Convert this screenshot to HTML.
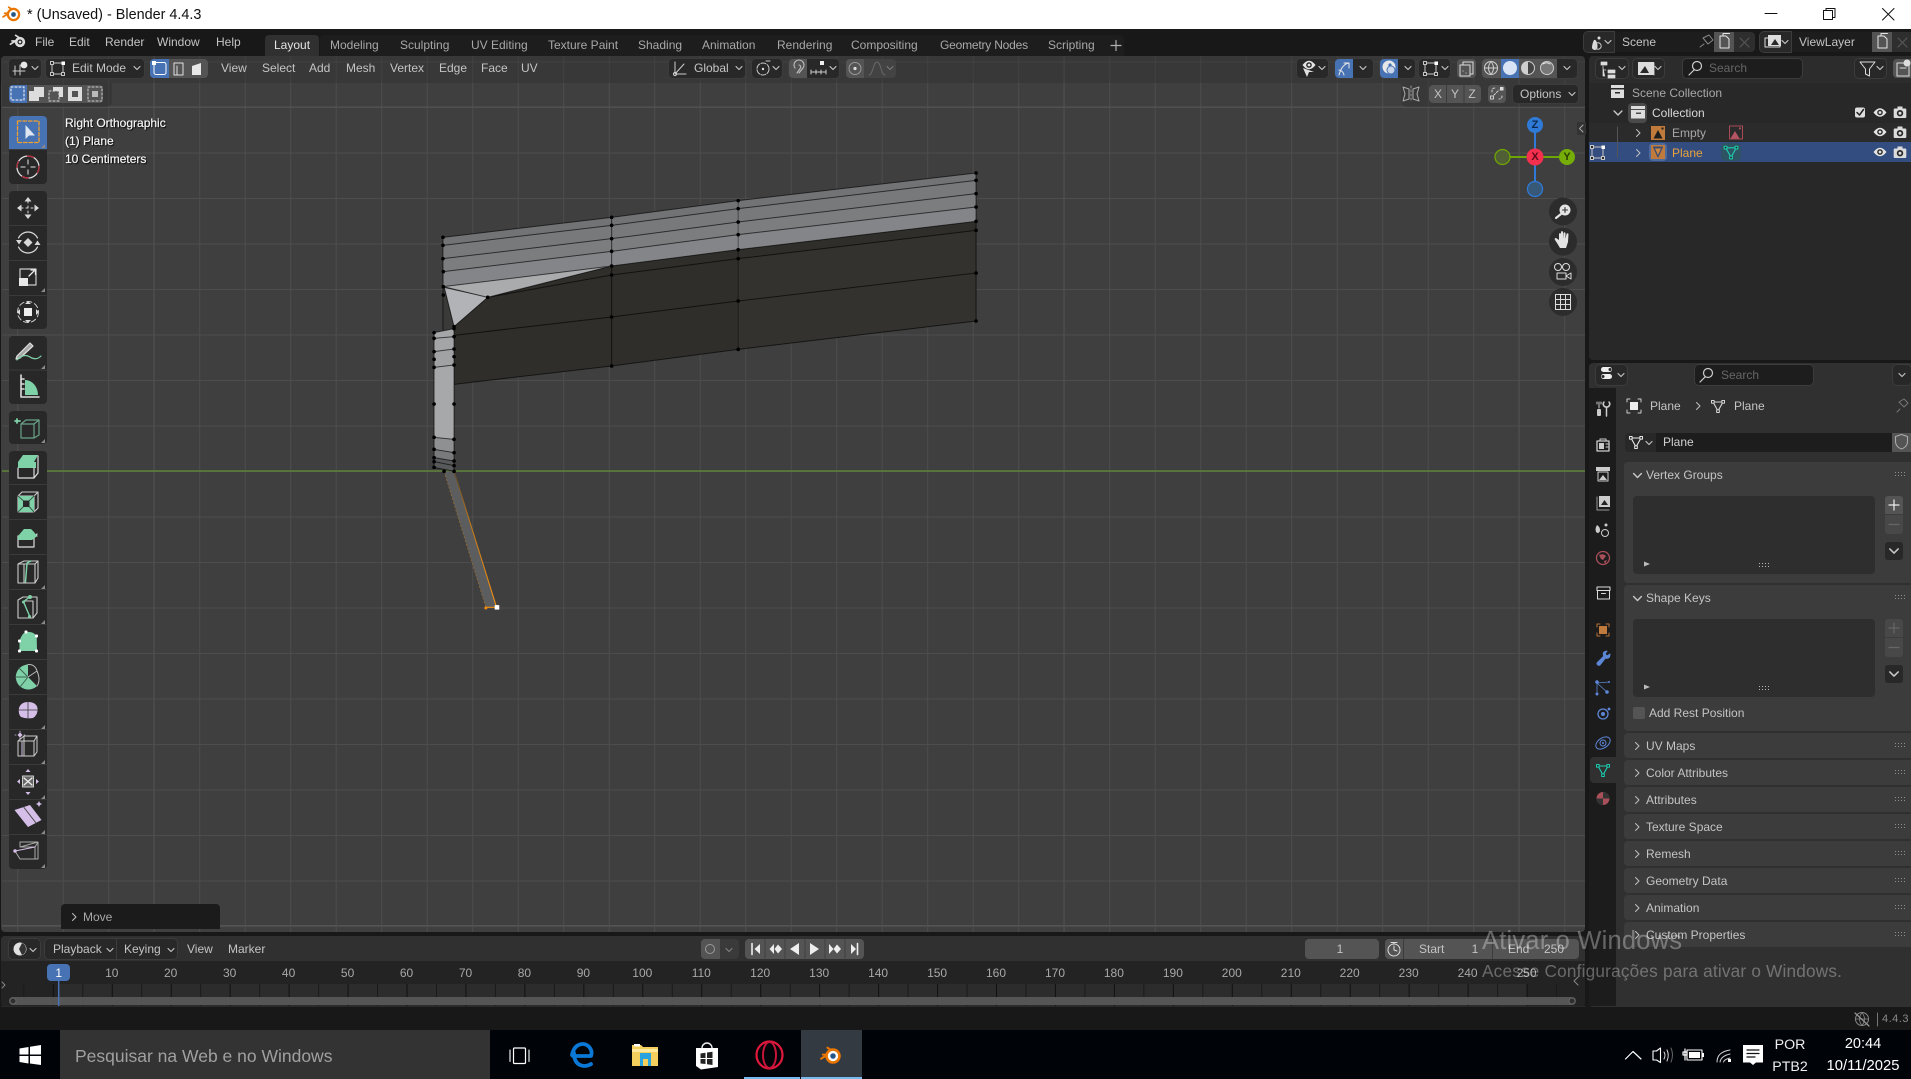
<!DOCTYPE html>
<html><head><meta charset="utf-8"><title>Blender</title>
<style>
html,body{margin:0;padding:0;width:1911px;height:1079px;overflow:hidden;background:#181818}
body{position:relative;font-family:"Liberation Sans",sans-serif;font-size:12px;color:#c4c4c4}
.b{position:absolute;display:block}
.t{position:absolute;line-height:0;white-space:nowrap;letter-spacing:0}
.c{transform:translateX(-50%)}
.d{color:#a8a8a8}
.w{background:#282828;border-radius:4px;box-shadow:0 0 0 1px #3c3c3c}
.g{background:#545454}
svg{position:absolute;left:0;top:0}
</style></head><body>
<!-- title bar -->
<i class="b" style="left:0;top:0;width:1911px;height:29px;background:#fff"></i>
<span class="t" style="left:27px;top:14.5px;font-size:14.4px;color:#111">* (Unsaved) - Blender 4.4.3</span>
<!-- top bar -->
<i class="b" style="left:0;top:29px;width:1911px;height:27px;background:#181818"></i>
<i class="b" style="left:320px;top:35px;width:804px;height:21px;background:#1d1d1d;border-radius:4px 4px 0 0"></i>
<i class="b" style="left:265px;top:35px;width:54px;height:21px;background:#303030;border-radius:4px 4px 0 0"></i>
<!-- viewport -->
<svg width="1911" height="1079" viewBox="0 0 1911 1079">
<defs>
<pattern id="gr" x="17.2" y="16" width="45.5" height="45.5" patternUnits="userSpaceOnUse"><path d="M.5 0V45.5M0 .5H45.5" stroke="#4d4d4d" stroke-width="1" fill="none"/></pattern>
<pattern id="tk" x="52.8" y="0" width="58.95" height="30" patternUnits="userSpaceOnUse"><path d="M.5 0V30" stroke="#101010"/><path d="M29.97 0V30" stroke="#1a1a1a"/></pattern>
<linearGradient id="og" gradientUnits="userSpaceOnUse" x1="92" y1="934" x2="207" y2="1342"><stop offset="0" stop-color="#5c4a2c"/><stop offset=".35" stop-color="#b8741c"/><stop offset="1" stop-color="#f59010"/></linearGradient>
</defs>
<path d="M5 56H1581a4 4 0 0 1 4 4V928a4 4 0 0 1-4 4H5a4 4 0 0 1-4-4V60a4 4 0 0 1 4-4Z" fill="#3f3f3f"/>
<clipPath id="vp"><rect x="2" y="56" width="1583" height="876" rx="4"/></clipPath>
<g clip-path="url(#vp)">
<rect x="0" y="56" width="1585" height="876" fill="url(#gr)"/>
<path d="M154 56V932M1064 56V932M1519 56V932" stroke="#505050" fill="none"/>
<path d="M0 107H1585M0 925.5H1585" stroke="#535353" fill="none"/>
<path d="M0 471H1585" stroke="#5f8238" stroke-width="1.5"/>
</g>
<!-- mesh -->
<g transform="translate(420,160) scale(.36996,.33333)" stroke-linejoin="round">
<polygon points="62,232 518,172 860,122 1503,39 1503,61 860,146 518,196 62,256" fill="#717375"/>
<polygon points="62,256 518,196 860,146 1503,61 1503,101 860,186 518,236 62,296" fill="#77797b"/>
<polygon points="62,296 518,236 860,186 1503,101 1503,141 860,224 518,274 63,335" fill="#7b7d7f"/>
<polygon points="63,335 518,274 860,224 1503,141 1503,184 860,269 518,318 63,380" fill="#838588"/>
<polygon points="63,380 518,318 183,412" fill="#a9abad"/>
<polygon points="66,384 183,412 92,500" fill="#b2b3b6"/>
<polygon points="63,380 66,384 92,500 92,508 63,512" fill="#3a3a38"/>
<polygon points="183,412 518,318 860,269 1503,184 1503,483 860,568 518,618 92,673 92,500" fill="#2f2e2a"/>
<polygon points="860,296 1503,211 1503,483 860,568" fill="#33322e"/>
<polygon points="38,518 92,506 92,530 38,535" fill="#a4a6a8"/>
<polygon points="38,535 92,530 92,567 38,575" fill="#a3a5a7"/>
<polygon points="38,575 92,567 92,615 38,622" fill="#a0a2a4"/>
<polygon points="38,622 92,615 92,838 38,832" fill="#a6a8aa"/>
<polygon points="38,832 92,838 92,878 38,868" fill="#8e9092"/>
<polygon points="38,868 92,878 92,903 38,893" fill="#787a7c"/>
<polygon points="38,893 92,903 92,934 38,922" fill="#58595a"/>
<polygon points="65,934 92,934 207,1342 178,1342" fill="#5c5d5e"/>
<g fill="none" stroke="#000" stroke-opacity=".62" stroke-width="1">
<path vector-effect="non-scaling-stroke" d="M62 232L518 172L860 122L1503 39M62 256L518 196L860 146L1503 61M62 296L518 236L860 186L1503 101M63 335L518 274L860 224L1503 141M63 380L518 318L860 269L1503 184M183 412L518 318M63 380L183 412L92 500L66 384M92 526L518 471L860 423L1503 339M518 345L860 296L1503 211M92 673L518 618L860 568L1503 483L1503 39M518 172V618M62 232V510M92 500V934M38 518V922M38 518L92 506M38 535L92 530M38 575L92 567M38 622L92 615M38 832L92 838M38 868L92 878M38 893L92 903M38 905L92 917M38 922L92 934M183 412L518 345"/>
<path vector-effect="non-scaling-stroke" stroke-opacity=".4" d="M860 122V568"/>
</g>
<path d="M92 934L207 1342L178 1342" fill="none" stroke="url(#og)" stroke-width="1.1" vector-effect="non-scaling-stroke"/>
<path d="M65 934L178 1342" fill="none" stroke="#9a6a2a" stroke-opacity=".8" stroke-dasharray="2 2" vector-effect="non-scaling-stroke"/>
<path d="M62 232h.1M62 256h.1M62 296h.1M63 335h.1M63 380h.1M63 405h.1M518 172h.1M518 196h.1M518 236h.1M518 274h.1M518 318h.1M518 345h.1M518 471h.1M518 618h.1M860 122h.1M860 146h.1M860 186h.1M860 224h.1M860 269h.1M860 296h.1M860 423h.1M860 568h.1M1503 39h.1M1503 61h.1M1503 101h.1M1503 141h.1M1503 184h.1M1503 211h.1M1503 339h.1M1503 483h.1M183 412h.1M92 500h.1M92 506h.1M92 530h.1M92 567h.1M92 590h.1M92 615h.1M92 732h.1M92 838h.1M92 878h.1M92 903h.1M92 917h.1M92 934h.1M38 518h.1M38 535h.1M38 575h.1M38 598h.1M38 622h.1M38 732h.1M38 832h.1M38 868h.1M38 893h.1M38 905h.1M38 922h.1M65 934h.1" stroke="#000" stroke-width="3.6" stroke-linecap="round" fill="none" vector-effect="non-scaling-stroke"/>
<path d="M178 1344h.1" stroke="#f08b10" stroke-width="3" stroke-linecap="round" vector-effect="non-scaling-stroke"/>
<path d="M208 1342h.1" stroke="#fff" stroke-width="4.5" stroke-linecap="square" vector-effect="non-scaling-stroke"/>
</g>
</svg>
<!-- viewport header -->
<i class="b" style="left:1px;top:56px;width:1584px;height:27px;background:rgba(48,48,48,.4);border-radius:4px 4px 0 0"></i>
<i class="b" style="left:2px;top:83px;width:110px;height:24px;background:rgba(48,48,48,.5);border-radius:0 0 6px 0"></i>
<i class="b" style="left:1401px;top:83px;width:184px;height:24px;background:rgba(48,48,48,.4);border-radius:0 0 0 6px"></i>
<i class="b w" style="left:9px;top:59px;width:32px;height:19px"></i>
<i class="b w" style="left:46px;top:59px;width:98px;height:19px"></i>
<i class="b g" style="left:150px;top:59px;width:58px;height:19px;border-radius:4px"></i>
<i class="b" style="left:150px;top:59px;width:19px;height:19px;background:#4772b3;border-radius:4px 0 0 4px"></i>
<i class="b w" style="left:669px;top:59px;width:76px;height:19px"></i>
<i class="b w" style="left:752px;top:59px;width:30px;height:19px"></i>
<i class="b w" style="left:789px;top:59px;width:50px;height:19px"></i>
<i class="b g" style="left:789px;top:59px;width:18px;height:19px;border-radius:4px 0 0 4px"></i>
<i class="b" style="left:846px;top:59px;width:50px;height:19px;background:#434343;border-radius:4px"></i>
<i class="b g" style="left:846px;top:59px;width:18px;height:19px;border-radius:4px 0 0 4px"></i>
<i class="b w" style="left:1297px;top:59px;width:31px;height:19px"></i>
<i class="b w" style="left:1335px;top:59px;width:38px;height:19px"></i>
<i class="b" style="left:1335px;top:59px;width:18px;height:19px;background:#4772b3;border-radius:4px 0 0 4px"></i>
<i class="b w" style="left:1380px;top:59px;width:35px;height:19px"></i>
<i class="b" style="left:1380px;top:59px;width:18px;height:19px;background:#4772b3;border-radius:4px 0 0 4px"></i>
<i class="b w" style="left:1419px;top:59px;width:31px;height:19px"></i>
<i class="b g" style="left:1457px;top:59px;width:19px;height:19px;border-radius:4px"></i>
<i class="b w" style="left:1482px;top:59px;width:95px;height:19px"></i>
<i class="b g" style="left:1482px;top:59px;width:75px;height:19px;border-radius:4px 0 0 4px"></i>
<i class="b" style="left:1501px;top:59px;width:18px;height:19px;background:#4772b3"></i>
<i class="b g" style="left:1429px;top:85px;width:52px;height:18px;border-radius:4px"></i>
<i class="b g" style="left:1488px;top:85px;width:18px;height:18px;border-radius:4px"></i>
<i class="b w" style="left:1513px;top:85px;width:65px;height:18px;background:#282828"></i>
<i class="b g" style="left:9px;top:85px;width:94px;height:18px;border-radius:4px"></i>
<i class="b" style="left:9px;top:85px;width:18px;height:18px;background:#4772b3;border-radius:4px 0 0 4px"></i>
<!-- toolbar -->
<i class="b" style="left:9px;top:116px;width:38px;height:68px;background:#282828;border-radius:4px"></i>
<i class="b" style="left:9px;top:116px;width:38px;height:33px;background:#4772b3;border-radius:4px 4px 0 0"></i>
<i class="b" style="left:9px;top:191px;width:38px;height:138px;background:#282828;border-radius:4px"></i>
<i class="b" style="left:9px;top:336px;width:38px;height:68px;background:#282828;border-radius:4px"></i>
<i class="b" style="left:9px;top:411px;width:38px;height:33px;background:#282828;border-radius:4px"></i>
<i class="b" style="left:9px;top:451px;width:38px;height:418px;background:#282828;border-radius:4px"></i>
<!-- move panel -->
<i class="b" style="left:61px;top:904px;width:159px;height:25px;background:#1b1b1b;border-radius:4px 4px 0 0"></i>
<!-- right gap / outliner -->
<i class="b" style="left:1586px;top:56px;width:325px;height:951px;background:#181818"></i>
<i class="b" style="left:1589px;top:56px;width:322px;height:304px;background:#282828;border-radius:4px 0 0 4px"></i>
<i class="b" style="left:1589px;top:56px;width:322px;height:27px;background:#2c2c2c;border-radius:4px 0 0 0"></i>
<i class="b" style="left:1589px;top:123px;width:322px;height:19px;background:#2b2b2b"></i>
<i class="b" style="left:1589px;top:142px;width:322px;height:20px;background:#334d80"></i>
<i class="b w" style="left:1596px;top:59px;width:32px;height:19px"></i>
<i class="b w" style="left:1633px;top:59px;width:31px;height:19px"></i>
<i class="b" style="left:1683px;top:59px;width:119px;height:19px;background:#1d1d1d;border-radius:4px;box-shadow:0 0 0 1px #3c3c3c"></i>
<i class="b w" style="left:1855px;top:59px;width:31px;height:19px"></i>
<i class="b g" style="left:1893px;top:59px;width:18px;height:19px;border-radius:4px 0 0 4px"></i>
<i class="b" style="left:1628px;top:103px;width:19px;height:20px;background:#4a4a4a;border-radius:4px"></i>
<i class="b" style="left:1649px;top:143px;width:18px;height:18px;background:#4f6a9d;border-radius:4px"></i>
<i class="b" style="left:1721px;top:143px;width:20px;height:18px;background:#2e5463;border-radius:5px"></i>
<!-- top bar right -->
<i class="b" style="left:1584px;top:32px;width:30px;height:20px;background:#282828;border-radius:4px 0 0 4px;box-shadow:0 0 0 1px #3c3c3c"></i>
<i class="b" style="left:1615px;top:32px;width:99px;height:20px;background:#1d1d1d"></i>
<i class="b g" style="left:1714px;top:32px;width:20px;height:20px"></i>
<i class="b" style="left:1734px;top:32px;width:21px;height:20px;background:#2e2e2e;border-radius:0 4px 4px 0"></i>
<i class="b" style="left:1760px;top:32px;width:31px;height:20px;background:#282828;border-radius:4px 0 0 4px;box-shadow:0 0 0 1px #3c3c3c"></i>
<i class="b" style="left:1792px;top:32px;width:80px;height:20px;background:#1d1d1d"></i>
<i class="b g" style="left:1872px;top:32px;width:20px;height:20px"></i>
<i class="b" style="left:1892px;top:32px;width:19px;height:20px;background:#2e2e2e"></i>
<!-- properties -->
<i class="b" style="left:1589px;top:363px;width:322px;height:644px;background:#303030;border-radius:4px 0 0 4px"></i>
<i class="b" style="left:1589px;top:388px;width:27px;height:618px;background:#1c1c1c"></i>
<i class="b" style="left:1590px;top:757px;width:26px;height:26px;background:#303030;border-radius:4px 0 0 4px"></i>
<i class="b" style="left:1695px;top:365px;width:118px;height:20px;background:#1d1d1d;border-radius:4px;box-shadow:0 0 0 1px #3c3c3c"></i>
<i class="b w" style="left:1596px;top:365px;width:31px;height:20px"></i>
<i class="b w" style="left:1893px;top:365px;width:18px;height:20px"></i>
<i class="b" style="left:1625px;top:433px;width:31px;height:19px;background:#282828;border-radius:4px 0 0 4px"></i>
<i class="b" style="left:1656px;top:433px;width:236px;height:19px;background:#1d1d1d"></i>
<i class="b g" style="left:1892px;top:433px;width:19px;height:19px"></i>
<i class="b" style="left:1624px;top:462px;width:287px;height:121px;background:#3c3c3c;border-radius:4px 0 0 4px"></i>
<i class="b" style="left:1633px;top:496px;width:242px;height:78px;background:#2e2e2e;border-radius:4px"></i>
<i class="b g" style="left:1885px;top:496px;width:18px;height:18px;border-radius:3px 3px 0 0"></i>
<i class="b" style="left:1885px;top:515px;width:18px;height:19px;background:#484848;border-radius:0 0 3px 3px"></i>
<i class="b" style="left:1885px;top:542px;width:18px;height:18px;background:#282828;border-radius:3px"></i>
<i class="b" style="left:1624px;top:585px;width:287px;height:146px;background:#3c3c3c;border-radius:4px 0 0 4px"></i>
<i class="b" style="left:1633px;top:619px;width:242px;height:78px;background:#2e2e2e;border-radius:4px"></i>
<i class="b" style="left:1885px;top:619px;width:18px;height:18px;background:#484848;border-radius:3px 3px 0 0"></i>
<i class="b" style="left:1885px;top:638px;width:18px;height:19px;background:#484848;border-radius:0 0 3px 3px"></i>
<i class="b" style="left:1885px;top:665px;width:18px;height:18px;background:#282828;border-radius:3px"></i>
<i class="b" style="left:1633px;top:707px;width:12px;height:12px;background:#545454;border-radius:2px"></i>
<i class="b" style="left:1624px;top:733px;width:287px;height:25px;background:#3c3c3c;border-radius:4px 0 0 4px"></i>
<i class="b" style="left:1624px;top:760px;width:287px;height:25px;background:#3c3c3c;border-radius:4px 0 0 4px"></i>
<i class="b" style="left:1624px;top:787px;width:287px;height:25px;background:#3c3c3c;border-radius:4px 0 0 4px"></i>
<i class="b" style="left:1624px;top:814px;width:287px;height:25px;background:#3c3c3c;border-radius:4px 0 0 4px"></i>
<i class="b" style="left:1624px;top:841px;width:287px;height:25px;background:#3c3c3c;border-radius:4px 0 0 4px"></i>
<i class="b" style="left:1624px;top:868px;width:287px;height:25px;background:#3c3c3c;border-radius:4px 0 0 4px"></i>
<i class="b" style="left:1624px;top:895px;width:287px;height:25px;background:#3c3c3c;border-radius:4px 0 0 4px"></i>
<i class="b" style="left:1624px;top:922px;width:287px;height:25px;background:#3c3c3c;border-radius:4px 0 0 4px"></i>
<!-- timeline -->
<i class="b" style="left:1px;top:936px;width:1584px;height:71px;background:#232323;border-radius:4px"></i>
<i class="b" style="left:1px;top:936px;width:1584px;height:25px;background:#303030;border-radius:4px 4px 0 0"></i>
<i class="b" style="left:59px;top:984px;width:1468px;height:23px;background:#2c2c2c"></i>
<svg width="1911" height="1079" viewBox="0 0 1911 1079" style="pointer-events:none">
<rect x="2" y="984" width="1583" height="23" fill="url(#tk)"/>
<rect x="9" y="997" width="1567" height="8" rx="4" fill="#555"/>
<circle cx="13" cy="1001" r="3" fill="#2e2e2e" stroke="#666"/>
<circle cx="1572" cy="1001" r="3" fill="#2e2e2e" stroke="#666"/>
<path d="M58.7 981V1007" stroke="#4772b3" stroke-width="1.5"/>
</svg>
<i class="b w" style="left:9px;top:939px;width:31px;height:20px"></i>
<i class="b w" style="left:45px;top:939px;width:132px;height:20px"></i>
<i class="b" style="left:116px;top:939px;width:1px;height:20px;background:#3c3c3c"></i>
<i class="b" style="left:701px;top:939px;width:38px;height:20px;background:#3a3a3a;border-radius:4px"></i>
<i class="b g" style="left:701px;top:939px;width:19px;height:20px;border-radius:4px 0 0 4px"></i>
<i class="b g" style="left:745px;top:939px;width:119px;height:20px;border-radius:4px"></i>
<i class="b g" style="left:1305px;top:939px;width:74px;height:20px;border-radius:4px"></i>
<i class="b g" style="left:1385px;top:939px;width:194px;height:20px;border-radius:4px"></i>
<i class="b" style="left:1492px;top:939px;width:1px;height:20px;background:#3c3c3c"></i>
<i class="b" style="left:1403px;top:939px;width:1px;height:20px;background:#3c3c3c"></i>
<i class="b" style="left:47px;top:964px;width:23px;height:17px;background:#4772b3;border-radius:4px"></i>
<!-- status + taskbar -->
<i class="b" style="left:0;top:1007px;width:1911px;height:23px;background:#181818"></i>
<i class="b" style="left:1px;top:1006px;width:1585px;height:1px;background:#2a2a2a"></i>
<i class="b" style="left:0;top:1030px;width:1911px;height:49px;background:#000308"></i>
<i class="b" style="left:60px;top:1030px;width:430px;height:49px;background:#333"></i>
<i class="b" style="left:801px;top:1030px;width:61px;height:49px;background:#343a42"></i>
<i class="b" style="left:744px;top:1077px;width:56px;height:2px;background:#76b9ed"></i>
<i class="b" style="left:801px;top:1077px;width:61px;height:2px;background:#76b9ed"></i>

<!-- ICONS -->
<svg width="1911" height="1079" viewBox="0 0 1911 1079" fill="none" stroke-linecap="round" stroke-linejoin="round">
<defs>
<g id="c"><path d="M-3-1.5L0 1.5L3-1.5" stroke="#c8c8c8" stroke-width="1.1" fill="none"/></g>
<g id="r"><path d="M-1.5-3.5L2 0L-1.5 3.5" stroke="#c0c0c0" fill="none"/></g>
<g id="eye"><path d="M-6.500 0Q0-8.500 6.500 0Q0 8.500-6.500 0Z" fill="#e4e4e4"/><circle r="2.800" fill="#282828"/><circle r="1.400" fill="#e4e4e4"/></g>
<g id="cam"><rect x="-6.300" y="-4" width="12.600" height="9.500" rx="1" fill="#dcdcdc"/><rect x="-2.500" y="-6" width="5" height="2.500" fill="#dcdcdc"/><circle cy=".7" r="3.200" fill="#282828"/><circle cy=".7" r="1.500" fill="#dcdcdc"/></g>
<g id="blend"><path d="M-13 3L-5-2M-11-1.5L-2-1.5M-6-9L2-4" stroke="#ea7600" stroke-width="2.2"/><circle r="7" fill="#fff" stroke="#ea7600" stroke-width="2.8"/><circle r="3" fill="#265787"/></g>
<g id="gd" fill="#8f8f8f"><rect width="1" height="1"/><rect x="3" width="1" height="1"/><rect x="6" width="1" height="1"/><rect x="9" width="1" height="1"/><rect y="3" width="1" height="1"/><rect x="3" y="3" width="1" height="1"/><rect x="6" y="3" width="1" height="1"/><rect x="9" y="3" width="1" height="1"/></g>
<g id="gd2" fill="#b8b8b8"><rect width="1" height="1"/><rect x="3" width="1" height="1"/><rect x="6" width="1" height="1"/><rect x="9" width="1" height="1"/><rect y="3" width="1" height="1"/><rect x="3" y="3" width="1" height="1"/><rect x="6" y="3" width="1" height="1"/><rect x="9" y="3" width="1" height="1"/></g>
<path id="cn" d="M4 0V4H0Z" fill="#8a8a8a"/>
<g id="meshi"><path d="M-5-4H5L0 5Z" stroke="currentColor" stroke-width="1.1"/><rect x="-6.500" y="-5.500" width="2.600" height="2.600" fill="#222" stroke="currentColor"/><rect x="3.900" y="-5.500" width="2.600" height="2.600" fill="#222" stroke="currentColor"/><rect x="-1.300" y="3.900" width="2.600" height="2.600" fill="#222" stroke="currentColor"/></g>
<g id="ed"><rect x="-6" y="-5" width="11" height="11" stroke="#c8c8c8" fill="none"/><rect x="-7.500" y="-6.500" width="3" height="3" fill="#282828" stroke="#c8c8c8"/><rect x="3.500" y="-6.500" width="3.500" height="3.500" fill="#fff"/><rect x="-7.500" y="4.500" width="3" height="3" fill="#282828" stroke="#c8c8c8"/><rect x="3.500" y="4.500" width="3" height="3" fill="#282828" stroke="#c8c8c8"/></g>
</defs>
<!-- title logo + window controls -->
<use href="#blend" transform="translate(13.500,14.500) scale(.8)"/>
<path d="M1765 13.5H1777" stroke="#111"/>
<rect x="1823.500" y="10.500" width="9" height="9" stroke="#111"/><path d="M1826 10V8.500H1835V17.500H1833" stroke="#111"/>
<path d="M1882.500 8.500L1894 20M1894 8.500L1882.500 20" stroke="#111"/>
<!-- top bar icon -->
<g transform="translate(20,42) scale(.74)"><path d="M-13 3L-5-2M-11-1.500L-2-1.500M-6-9L2-4" stroke="#ddd" stroke-width="2.200"/><circle r="7" fill="#ddd"/><circle r="3.400" fill="#181818"/><circle r="1.800" fill="#ddd"/></g>
<path d="M1111 45.500H1121M1116 40.500V50.500" stroke="#b0b0b0" stroke-width="1.200"/>
<!-- viewport header left -->
<path d="M15 66V75M13 71H25M20 65V75" stroke="#ccc"/><circle cx="24" cy="65" r="3.400" fill="#e8e8e8"/><use href="#c" x="35" y="68"/>
<use href="#ed" x="58" y="68"/><use href="#c" x="137" y="68"/>
<g stroke-width="1"><rect x="154" y="62.500" width="12" height="12" stroke="#fff" rx="2"/><rect x="152" y="61" width="4" height="4" fill="#fff"/>
<path d="M174 63H183V75H174ZM177 66V75" stroke="#e0e0e0"/><path d="M192 66L201 63V75H192Z" fill="#e8e8e8"/></g>
<!-- global -->
<path d="M675 62V74L686 74M675 74L684 64" stroke="#ccc"/><circle cx="675" cy="74" r="1.600" stroke="#ccc"/><use href="#c" x="739" y="68"/>
<circle cx="763" cy="69" r="6" stroke="#ccc" stroke-dasharray="5 1.500"/><circle cx="763" cy="69" r="1.200" fill="#ddd"/><path d="M766 61H770" stroke="#ccc"/><use href="#c" x="776" y="68"/>
<path d="M795 68a5 5 0 1 1 8 0L799 73M799 65a2 2 0 0 1 1.500 3L797 73" stroke="#bdbdbd" stroke-width="1.100"/>
<path d="M811 70V74M816 70V74M821 70V74M826 70V74M811 72H826" stroke="#ccc"/><rect x="820" y="61" width="4" height="4" fill="#eee"/><use href="#c" x="833" y="68"/>
<circle cx="855" cy="68.500" r="6" stroke="#999"/><circle cx="855" cy="68.500" r="1.600" fill="#ddd"/>
<path d="M869 75C873 75 873 62 877 62C881 62 881 75 885 75" stroke="#666"/><use href="#c" x="890" y="68" opacity=".4"/>
<!-- viewport header right -->
<use href="#eye" x="1309" y="65"/><path d="M1303 68L1307 77L1309 72L1314 72Z" fill="#e0e0e0"/><use href="#c" x="1322" y="68"/>
<path d="M1339 75Q1342 64 1349 63M1344 63H1349V68M1339 70a6 6 0 0 1 5 5" stroke="#e8e8e8"/><use href="#c" x="1363" y="68"/>
<circle cx="1389" cy="67" r="6.500" fill="#e8e8e8"/><circle cx="1391" cy="70" r="4" stroke="#4772b3" fill="#c8d4e8"/><circle cx="1390" cy="65" r="1.600" fill="#4772b3"/><use href="#c" x="1408" y="68"/>
<use href="#ed" x="1431" y="68"/><use href="#c" x="1445" y="68"/>
<rect x="1463" y="62" width="10" height="12" stroke="#ddd"/><rect x="1460" y="65" width="10" height="11" stroke="#ddd" fill="#545454"/><path d="M1463 71h.1M1466 73h.1" stroke="#ddd"/>
<circle cx="1491" cy="68" r="6.500" stroke="#cfcfcf"/><path d="M1484.500 68H1497.500M1491 61.500Q1486 68 1491 74.500Q1496 68 1491 61.500" stroke="#cfcfcf"/>
<circle cx="1510" cy="68" r="7" fill="#d8e4f6"/>
<circle cx="1528" cy="68" r="6.500" fill="#444" stroke="#ccc"/><path d="M1528 61.500A6.500 6.500 0 0 0 1528 74.500Z" fill="#cfcfcf"/>
<circle cx="1547" cy="68" r="6.500" fill="#777" stroke="#ccc"/><path d="M1543 64a6 6 0 0 1 7 0" stroke="#eee"/>
<use href="#c" x="1567" y="68"/>
<!-- tool settings right -->
<path d="M1411 86V102" stroke="#999" stroke-dasharray="2 2"/><path d="M1409 89L1403 87L1405 94L1403 101L1409 99ZM1413 89L1419 87L1417 94L1419 101L1413 99Z" stroke="#aaa"/>
<path d="M1446.500 85V103M1464 85V103" stroke="#3c3c3c"/>
<rect x="1490.500" y="96" width="3" height="3" stroke="#ccc"/><rect x="1500" y="87" width="3.500" height="3.500" fill="#ddd"/><path d="M1494 95L1499 90M1492 92V90a3 3 0 0 1 3-2M1502 96v1a3 3 0 0 1-3 2" stroke="#ccc" stroke-dasharray="2 1.500"/>
<use href="#c" x="1572" y="94"/>
<!-- select modes -->
<rect x="11" y="87" width="13" height="13" stroke="#fff" stroke-dasharray="2 2"/>
<rect x="29" y="91" width="10" height="10" fill="#ddd"/><rect x="34" y="87" width="10" height="10" fill="#ddd"/>
<rect x="49" y="91" width="10" height="10" stroke="#ddd" stroke-dasharray="2 2"/><path d="M53 87H63V97H59V91H53Z" fill="#ddd"/>
<path d="M68 87H82V101H68ZM72 91V97H78V91Z" fill="#ddd" fill-rule="evenodd"/>
<rect x="88" y="87" width="14" height="14" stroke="#ccc" stroke-dasharray="2 2"/><rect x="92" y="91" width="6" height="6" fill="#bbb"/>
<!-- tools -->
<rect x="17.500" y="121" width="21.500" height="21.500" stroke="#f0a030" stroke-width="1.300" stroke-dasharray="3.500 2"/><path d="M25.500 125V139L29 135.500L35 135.500Z" fill="#dfe6f2"/>
<use href="#cn" x="41" y="144"/>
<circle cx="28" cy="167" r="11" stroke="#ddd" stroke-width="1.300"/><circle cx="28" cy="167" r="11" stroke="#b03040" stroke-width="1.400" stroke-dasharray="6 11"/><path d="M21 167H25M31 167H35M28 160V164M28 170V174" stroke="#bbb" stroke-width="1.300"/>
<g fill="#d8d8d8"><path d="M28 197l-3.500 4.500h7zM28 219l-3.500-4.500h7zM17 208l4.500-3.500v7zM39 208l-4.500-3.500v7z"/></g><path d="M21 208H35M28 201V215" stroke="#d8d8d8" stroke-dasharray="2 3"/>
<path d="M18.500 238A10.500 10.500 0 0 1 37.500 238M37.500 247A10.500 10.500 0 0 1 18.500 247" stroke="#d8d8d8" stroke-width="1.200"/><path d="M16 240l3 4.500 3-4.500zM34.500 245l3-4.500 3 4.500z" fill="#d8d8d8"/><path d="M28 238l4.500 4.500-4.500 4.500-4.500-4.500z" fill="#d8d8d8"/>
<rect x="20" y="269" width="16" height="16" stroke="#ccc" stroke-width="1.200"/><rect x="19" y="278" width="9" height="8" fill="#e8e8e8"/><path d="M29 276L35 270M31 270H35.500V274.500" stroke="#e8e8e8" stroke-width="1.300"/><use href="#cn" x="41" y="288"/>
<circle cx="28" cy="312" r="10.500" stroke="#ccc" stroke-dasharray="5 3"/><rect x="24" y="308" width="8" height="8" fill="#eee"/><path d="M28 301l-3 3h6zM28 323l-3-3h6zM17 312l3-3v6zM39 312l-3-3v6z" fill="#ddd"/>
<path d="M17 356L30 343L33 346L20 358L16 359Z" stroke="#ddd" stroke-width="1.200" fill="#ddd" fill-opacity=".7"/><path d="M17 360Q24 353 30 357T41 356" stroke="#7fd1a8" stroke-width="1.200"/><use href="#cn" x="41" y="365"/>
<path d="M21 375V397H39M21 379H24M21 384H24M21 389H24" stroke="#ddd" stroke-width="1.600"/><path d="M25 380V395H38A13 15 0 0 0 25 380Z" fill="#7fd1a8"/>
<path d="M17 419V423M15 421H20" stroke="#7fd1a8" stroke-width="1.800"/><path d="M21 424L26 420H39V435L34 438H21ZM21 424H34V438M34 424L39 420" stroke="#6aa388" stroke-width="1.200"/><use href="#cn" x="41" y="439"/>
<path d="M18 462L23 455H38L34 462Z" fill="#7fd1a8"/><rect x="18" y="462" width="18" height="6" fill="#7fd1a8"/><path d="M18 468V478H34V468M34 478L38 473V456" stroke="#ddd" stroke-width="1.200"/>
<path d="M18 496H34V512H18ZM34 496L38 492V508L34 512M22 492H38M18 496L22 492" stroke="#ccc" stroke-width="1.100"/><path d="M18 496H34V512H18Z" fill="#7fd1a8"/><path d="M18 496L23 500.500M34 496L29.500 500.500M18 512L23 507M34 512L29.500 507" stroke="#355a48"/><rect x="23" y="500.500" width="6.500" height="6.500" fill="#282828"/>
<path d="M18 536H37M18 536V547H34V538L37 534" stroke="#ddd" stroke-width="1.200"/><path d="M18 536L24 529H31L34 532L37 536L32 540H18Z" fill="#7fd1a8"/>
<path d="M18 564V583H24V564ZM24 564H35V583H24M35 564L38 561V578L35 583M18 564L24 561H38" stroke="#ccc" stroke-width="1.100"/><path d="M25.500 582L27 563L31 561" stroke="#7fd1a8" stroke-width="1.500"/><use href="#cn" x="41" y="585"/>
<path d="M18 600V618H33L37 613V597H23ZM24 601L33 601L33 618" stroke="#ccc" stroke-width="1.100"/><path d="M23 602L29 597.500M24 603L30 617" stroke="#7fd1a8" stroke-width="1.400"/><circle cx="23.500" cy="602" r="1.500" fill="#7fd1a8"/><circle cx="30" cy="597" r="2" fill="#7fd1a8"/><circle cx="29.500" cy="616.500" r="1.500" fill="#7fd1a8"/><use href="#cn" x="41" y="620"/>
<path d="M19.500 641Q22 633 26 632Q33 631 36.700 636L37 651H19.500Z" fill="#7fd1a8"/><rect x="18" y="639.500" width="3" height="3" rx="1" fill="#fff"/><rect x="24.500" y="630.500" width="3" height="3" rx="1" fill="#fff"/><rect x="35" y="634.500" width="3" height="3" rx="1" fill="#fff"/><rect x="18" y="649.500" width="3" height="3" rx="1" fill="#fff"/><rect x="35" y="649.500" width="3" height="3" rx="1" fill="#fff"/>
<path d="M28 677V664.500A12.500 12.500 0 1 0 37 686Z" fill="#7fd1a8"/><path d="M28 677L15.500 677M28 677L19 668M28 677L20 687" stroke="#3c6650"/><path d="M28 664.500Q35 664 37 671L28 677M37 671Q41 680 37 686" stroke="#bbb" stroke-width="1"/>
<path d="M19 708Q21 702 28 702Q36 702 37.500 708Q38 715 33 718Q26 719 21 717Q18 714 19 708Z" fill="#d5bfe8"/><path d="M19 710H37M28 702V718" stroke="#3a3a3a" stroke-width=".8"/><use href="#cn" x="41" y="725"/>
<g transform="translate(0,-4)"><path d="M18 739l2-2 2 2-2 2zM20 737V735M20 743V741M16 739H15M25 739H24" fill="#d5bfe8" stroke="#d5bfe8" stroke-width=".8"/><path d="M18 745V760H34L37 756V740H24L18 745ZM24 740V760M18 745H34V760M34 745L37 740" stroke="#ccc" stroke-width="1"/><path d="M22 746V760" stroke="#d5bfe8" stroke-width="1"/></g><use href="#cn" x="41" y="760"/>
<rect x="22.500" y="776" width="11" height="11" fill="#666" stroke="#ccc"/><path d="M24 778L32 785M32 778L24 785" stroke="#eee" stroke-width="1.300"/><g fill="#d5bfe8"><path d="M28 769l-2.500 3h5zM28 795l-2.500-3h5zM17 781.500l3-2.500v5zM39 781.500l-3-2.500v5z"/></g><use href="#cn" x="41" y="795"/>
<path d="M14.500 810L30 805L41.500 820L28 827Z" fill="#d5bfe8"/><path d="M24 807.500L36 823" stroke="#444"/><path d="M39 801l1 2 2 1-2 1-1 2-1-2-2-1 2-1z" fill="#d5bfe8"/><use href="#cn" x="41" y="830"/>
<path d="M20 842L38 842V859H20L15 851M20 842V847L38 842M20 847H35V859M35 847L38 842" stroke="#aaa" stroke-width="1"/><path d="M15 851L35 847" stroke="#d5bfe8"/><circle cx="15" cy="851" r="1.700" fill="#d5bfe8"/><use href="#cn" x="41" y="864"/>
<!-- toolbar separators -->
<path d="M9 149.500H47M9 225.500H47M9 260.500H47M9 295.500H47M9 370H47M9 484.500H47M9 519.500H47M9 554.500H47M9 589.500H47M9 624.500H47M9 659.500H47M9 694.500H47M9 729.500H47M9 764.500H47M9 799.500H47M9 834.500H47" stroke="#3a3a3a"/>
<!-- gizmo -->
<path d="M1535 125V189" stroke="#2f7ad6" stroke-width="2"/><path d="M1510 157H1567" stroke="#6ea500" stroke-width="2"/>
<circle cx="1502.500" cy="157" r="7.500" fill="#505f35" stroke="#6ea500" stroke-width="1.300"/>
<circle cx="1535" cy="189" r="7.500" fill="#385878" stroke="#2f7ad6" stroke-width="1.300"/>
<circle cx="1535" cy="125" r="8" fill="#2f7ad6"/><circle cx="1567" cy="157" r="8" fill="#76ad08"/><circle cx="1535" cy="157" r="8.500" fill="#f5304f"/>
<rect x="1577" y="122" width="9" height="13" fill="#333"/><path d="M1583 125L1579.500 128.500L1583 132" stroke="#aaa"/>
<circle cx="1563" cy="211.500" r="14" fill="#2c2c2c"/><circle cx="1563" cy="241.700" r="14" fill="#2c2c2c"/><circle cx="1563" cy="272" r="14" fill="#2c2c2c"/><circle cx="1563" cy="302" r="14" fill="#2c2c2c"/>
<circle cx="1565" cy="210" r="5.500" fill="#e4e4e4"/><path d="M1561 214L1556 218" stroke="#e4e4e4" stroke-width="2.200"/><path d="M1565 207.500V212.500M1562.500 210H1567.500" stroke="#333" stroke-width="1.100"/>
<path d="M1557 243l-2-3q-1-2 1-2l3 2v-6q1-2 2 0l0 5v-7q1-2 2 0v7l.5-6q1-1.500 2 0v6l1-5q1-1.500 2 0l-.5 8-2 6h-6z" fill="#e4e4e4"/>
<circle cx="1558" cy="267" r="3.500" stroke="#ddd"/><circle cx="1566" cy="267" r="3.500" stroke="#ddd"/><rect x="1557" y="273" width="9" height="6" stroke="#ddd"/><path d="M1566 276L1571 273V279Z" stroke="#ddd"/>
<path d="M1555.500 294.500H1570.500V309.500H1555.500ZM1560.500 294.500V309.500M1565.500 294.500V309.500M1555.500 299.500H1570.500M1555.500 304.500H1570.500" stroke="#ddd"/>
<!-- move chevron -->
<use href="#r" x="74" y="917"/>
<!-- top right -->
<path d="M1594 40a3 6 0 0 1 3 9a3 3 0 0 1-5-1q0-4 2-8z" fill="#ddd"/><circle cx="1599" cy="38" r="1.500" fill="#ddd"/><circle cx="1598" cy="46" r="3.200" stroke="#ccc"/><use href="#c" x="1608" y="42"/>
<path d="M1700 47L1704 44M1703 38L1709 35L1713 40L1708 44Z" stroke="#888"/>
<path d="M1720 36H1726L1729 39V48H1720ZM1723 36V33.500H1729.500" stroke="#e6e6e6"/><path d="M1740 38L1749 47M1749 38L1740 47" stroke="#555" stroke-width="1.200"/>
<path d="M1765 38H1780V47H1765Z" stroke="#ddd"/><rect x="1768" y="35" width="13" height="11" fill="#ddd"/><path d="M1771 45L1775 39L1779 45Z" fill="#282828"/><use href="#c" x="1785" y="42"/>
<path d="M1878 36H1884L1887 39V48H1878ZM1881 36V33.500H1887.500" stroke="#e6e6e6"/><path d="M1898 38L1907 47M1907 38L1898 47" stroke="#555" stroke-width="1.200"/>
<!-- outliner header -->
<path d="M1601 62H1607V65H1601ZM1603 66V76H1605M1603 70H1606M1608 70H1615V73H1608ZM1608 75H1615V78H1608Z" fill="#ddd" stroke="#ddd" stroke-width=".7"/><use href="#c" x="1622" y="68"/>
<path d="M1639 63H1654V75" stroke="#bbb"/><rect x="1638" y="62" width="16" height="13" fill="#ddd"/><path d="M1640 73L1645 66L1649 73Z" fill="#282828"/><use href="#c" x="1658" y="68"/>
<circle cx="1697" cy="66" r="4.500" stroke="#ccc" stroke-width="1.200"/><path d="M1694 70L1689 75" stroke="#ccc" stroke-width="1.200"/>
<path d="M1860 62H1875L1869.500 69V76L1865.500 74V69Z" stroke="#ddd"/><use href="#c" x="1880" y="68"/>
<rect x="1897" y="63" width="12" height="13" stroke="#ddd"/><path d="M1900 68H1906" stroke="#ddd"/><circle cx="1907" cy="63" r="3.500" fill="#ddd"/>
<!-- outliner rows -->
<path d="M1611 85H1624V88H1611Z" fill="#ddd"/><path d="M1611 89.500H1624V98H1611Z" fill="#ddd"/><rect x="1615" y="92" width="5" height="1.500" fill="#282828"/>
<use href="#c" transform="translate(1618,113) scale(1.300)"/>
<rect x="1631" y="106" width="14" height="3" fill="#ddd"/><rect x="1631" y="110" width="14" height="8.500" fill="#ddd"/><rect x="1636" y="112.500" width="5" height="1.500" fill="#4a4a4a"/>
<rect x="1855" y="107.500" width="10" height="10" rx="2" fill="#ddd"/><path d="M1857 112.500L1859.500 115L1863.500 109.500" stroke="#222" stroke-width="1.500"/>
<use href="#eye" x="1880" y="112.500"/><use href="#cam" x="1900" y="112.500"/>
<use href="#eye" x="1880" y="132"/><use href="#cam" x="1900" y="132.500"/>
<use href="#eye" x="1880" y="152"/><use href="#cam" x="1900" y="152.500"/>
<use href="#r" x="1638" y="133"/><use href="#r" x="1638" y="153"/>
<path d="M1617.500 127V157" stroke="#555"/>
<rect x="1651" y="126" width="14" height="14" fill="#c07a3c"/><path d="M1653.500 138.500L1658 130L1662.500 138.500Z" fill="#1d1d1d"/><rect x="1661.500" y="127.500" width="2" height="2" fill="#1d1d1d"/>
<rect x="1729.500" y="126" width="13" height="13" stroke="#a94a55"/><path d="M1730.500 138.500L1735 131L1739.500 138.500Z" fill="#b35563"/><rect x="1739" y="127.500" width="1.800" height="1.800" fill="#b35563"/>
<rect x="1651" y="145" width="14" height="14" fill="#c07a3c"/><path d="M1653.500 147L1662.500 147L1658 157Z" fill="#3d4f70" stroke="#3d4f70"/><path d="M1655 148.500H1661L1658 155Z" fill="#d0873f"/>
<use href="#meshi" transform="translate(1731,152) scale(1.050)" color="#1ccfb0"/>
<use href="#ed" x="1598" y="152"/>
<!-- props header -->
<rect x="1601" y="367" width="11" height="5" rx="2.500" fill="#eee"/><rect x="1601" y="374" width="11" height="5" rx="2.500" fill="#eee"/><circle cx="1610" cy="369.500" r="1.500" fill="#282828"/><circle cx="1603" cy="376.500" r="1.500" fill="#282828"/><use href="#c" x="1621" y="375"/>
<circle cx="1708" cy="373" r="4.500" stroke="#ccc" stroke-width="1.200"/><path d="M1705 377L1700 382" stroke="#ccc" stroke-width="1.200"/>
<use href="#c" x="1902" y="375"/>
<!-- breadcrumbs -->
<path d="M1627 402V399H1630M1638 399H1641V402M1641 410V413H1638M1630 413H1627V410" stroke="#ccc"/><rect x="1630" y="402" width="8" height="8" fill="#eee"/>
<use href="#r" x="1698" y="406"/>
<use href="#meshi" transform="translate(1718,406)" color="#d8d8d8"/>
<path d="M1897 412L1900 409M1899 402L1904 399L1908 403L1904 407Z" stroke="#777"/>
<use href="#meshi" transform="translate(1636,442)" color="#e8e8e8"/><use href="#c" x="1649" y="443"/>
<path d="M1895.500 436.500L1901.500 434.500L1907.500 436.500V442Q1907 447 1901.500 449Q1896 447 1895.500 442Z" stroke="#aaa" stroke-width="1.100"/>
<!-- panel chevrons -->
<use href="#c" transform="translate(1637.500,475.500) scale(1.300)"/>
<use href="#c" transform="translate(1637.500,598.500) scale(1.300)"/>
<use href="#r" x="1637" y="746"/><use href="#r" x="1637" y="773"/><use href="#r" x="1637" y="800"/><use href="#r" x="1637" y="827"/><use href="#r" x="1637" y="854"/><use href="#r" x="1637" y="881"/><use href="#r" x="1637" y="908"/><use href="#r" x="1637" y="935"/>
<use href="#gd" x="1895" y="472"/><use href="#gd" x="1895" y="595"/><use href="#gd" x="1895" y="743"/><use href="#gd" x="1895" y="770"/><use href="#gd" x="1895" y="797"/><use href="#gd" x="1895" y="824"/><use href="#gd" x="1895" y="851"/><use href="#gd" x="1895" y="878"/><use href="#gd" x="1895" y="905"/><use href="#gd" x="1895" y="932"/>
<use href="#gd2" x="1759" y="563"/><use href="#gd2" x="1759" y="686"/>
<path d="M1644 561.500L1650 564L1644 566.500Z" fill="#bbb"/><path d="M1644 684.500L1650 687L1644 689.500Z" fill="#bbb"/>
<path d="M1889 505H1899M1894 500V510" stroke="#eee" stroke-width="1.200"/><path d="M1889 524.500H1899" stroke="#666" stroke-width="1.200"/><use href="#c" transform="translate(1894,551) scale(1.400)"/>
<path d="M1889 628H1899M1894 623V633" stroke="#666" stroke-width="1.200"/><path d="M1889 647.500H1899" stroke="#666" stroke-width="1.200"/><use href="#c" transform="translate(1894,674) scale(1.400)"/>
<!-- prop tabs -->
<path d="M1599 402V408M1597 404V402M1601 404V402" stroke="#ccc"/><rect x="1597" y="409" width="4" height="7" rx="1" fill="#ccc"/><path d="M1604 402a3 3 0 0 0 2.500 5V416M1609 402a3 3 0 0 1-2.500 5" stroke="#ccc" stroke-width="1.500"/>
<path d="M1597 441H1609V451H1597Z" stroke="#ccc" stroke-width="1.300"/><path d="M1600 441V439H1606V441" stroke="#ccc"/><rect x="1599" y="443" width="5" height="6" fill="#ccc"/><path d="M1606 444H1608M1606 447H1608" stroke="#ccc"/>
<rect x="1596" y="467" width="14" height="4" fill="#ccc"/><path d="M1598 472H1608V481H1598Z" stroke="#ccc"/><path d="M1599 480L1603 475L1607 480Z" fill="#ccc"/>
<path d="M1597 497V510H1609" stroke="#999"/><rect x="1599" y="496" width="11" height="11" fill="#ccc"/><path d="M1601 505L1604.500 500L1608 505Z" fill="#222"/>
<path d="M1597 525q-3 5 0 8q3 0 3-3q0-3-3-5z" fill="#ccc"/><circle cx="1606" cy="525" r="1.500" fill="#ccc"/><circle cx="1605" cy="533" r="3.500" stroke="#ccc"/>
<circle cx="1603" cy="558" r="6.500" stroke="#a84f5a" stroke-width="1.300"/><path d="M1599 555Q1603 553 1606 556L1603 560L1601 559ZM1604 561L1607 560L1605 564Z" fill="#a84f5a"/>
<rect x="1597" y="587" width="13" height="3.500" stroke="#ddd"/><rect x="1597.500" y="590.500" width="12" height="8.500" stroke="#ddd"/><path d="M1601.500 593.500H1605.500" stroke="#ddd"/>
<path d="M1597 627V624H1600M1606 624H1609V627M1609 633V636H1606M1600 636H1597V633" stroke="#b5703a"/><rect x="1599" y="626" width="8" height="8" fill="#c07a3c"/>
<path d="M1597 663L1604 656a3 3 0 0 1 0-4l3-1-2 3 2 2 3-2-.5 3q-2 2-4 1L1600 665Q1597 666 1597 663Z" fill="#5d86d6" stroke="#5d86d6"/>
<path d="M1597 683L1607 692M1597 683V694M1597 683L1609 682" stroke="#5d86d6" stroke-width=".8"/><circle cx="1597" cy="682" r="1.800" fill="#5d86d6"/><circle cx="1609" cy="682" r="1" fill="#5d86d6"/><circle cx="1597" cy="694" r="1.500" fill="#5d86d6"/><circle cx="1607" cy="692" r="1.800" fill="#5d86d6"/>
<circle cx="1603" cy="714" r="5" stroke="#5d86d6" stroke-width="1.300"/><circle cx="1603" cy="714" r="2" fill="#5d86d6"/><circle cx="1609" cy="709" r="1.400" fill="#5d86d6"/>
<g transform="rotate(-35 1603 743)"><ellipse cx="1603" cy="743" rx="8" ry="5" stroke="#5d86d6"/><circle cx="1603" cy="743" r="3" stroke="#5d86d6"/><circle cx="1603" cy="743" r="1" fill="#5d86d6"/></g>
<use href="#meshi" transform="translate(1603,770)" color="#1ccfb0"/>
<circle cx="1603" cy="798.500" r="6.500" fill="#a84f5a"/><path d="M1603 792A6.500 6.500 0 0 1 1609.500 798.500H1603V805A6.500 6.500 0 0 1 1596.500 798.500H1603Z" fill="#333"/>
<!-- timeline icons -->
<circle cx="20" cy="949" r="6.500" fill="#e0e0e0"/><path d="M22 943L19 949L22 955A6.500 6.500 0 0 0 22 943Z" fill="#333"/><use href="#c" x="33" y="950"/>
<use href="#c" x="110" y="950"/><use href="#c" x="171" y="950"/>
<circle cx="710" cy="949" r="4.500" stroke="#999"/><use href="#c" x="729" y="950" opacity=".5"/>
<path d="M765 939V959M785 939V959M805 939V959M825 939V959M845 939V959" stroke="#3f3f3f"/>
<path d="M752 943.500V954.500" stroke="#eee" stroke-width="1.600"/><path d="M760 944V954L754.500 949Z" fill="#eee"/>
<g transform="translate(4,0)"><path d="M770 944V954L765.500 949Z" fill="#eee"/><path d="M774 944.500L778 949L774 953.500L770.500 949Z" fill="#eee"/></g>
<path d="M799 943V955L790 949Z" fill="#eee"/>
<path d="M810 943V955L819 949Z" fill="#eee"/>
<g transform="translate(3,0)"><path d="M826 944V954L830.500 949Z" fill="#eee"/><path d="M834 944.500L838 949L834 953.500L830.500 949Z" fill="#eee"/></g>
<path d="M851 944V954L856 949Z" fill="#eee"/><path d="M857.500 943.500V954.500" stroke="#eee" stroke-width="1.600"/>
<circle cx="1394" cy="950" r="6" stroke="#ddd"/><path d="M1394 946V950L1397 951M1391 942.500H1397M1394 942.500V944" stroke="#ddd"/>
<path d="M1578 977L1574 981L1578 985" stroke="#888"/><path d="M2 982L5 985L2 988" stroke="#888"/>
<!-- status -->
<circle cx="1862" cy="1019" r="6.500" stroke="#888"/><path d="M1855.500 1019H1868.500M1862 1012.500Q1857 1019 1862 1025.500Q1867 1019 1862 1012.500" stroke="#888" stroke-width=".8"/><path d="M1855 1013L1869 1026" stroke="#999" stroke-width="1.200"/>
<path d="M1877.500 1013V1026" stroke="#777"/>
<!-- taskbar -->
<path d="M19.500 1048.500L28.500 1047V1054.500H19.500ZM30 1046.800L41 1045V1054.500H30ZM19.500 1056H28.500V1063.500L19.500 1062ZM30 1056H41V1065L30 1063.500Z" fill="#fff"/>
<rect x="513.500" y="1048" width="12" height="15.500" rx="1" stroke="#fff" stroke-width="1.200"/><path d="M510 1050V1061.500M529 1050V1061.500" stroke="#fff" stroke-width="1.100"/>
<path d="M573 1056H591A9 9 0 0 0 582 1044Q574 1045 572 1055M574 1053Q574 1065 584 1066Q588 1066 591 1064" stroke="#0a78d6" stroke-width="3.800"/>
<path d="M632 1045H641L643 1047H658V1066H632Z" fill="#f5cf5d"/><rect x="632" y="1049" width="26" height="3" fill="#ffe89b"/><path d="M640 1053H651V1066H648V1059H643V1066H640Z" fill="#29a3e0"/><rect x="634" y="1044" width="6" height="2.500" fill="#fff"/>
<path d="M696 1048H718V1067L701 1069.500L696 1066Z" fill="#fff"/><path d="M702 1048a5 5 0 0 1 10 0" stroke="#eee" stroke-width="1.400"/><path d="M700.500 1053.500L705.500 1052.800V1058H700.500ZM707 1052.500L712.500 1051.700V1058H707ZM700.500 1059H705.500V1064L700.500 1063.500ZM707 1059H712.500V1065L707 1064.300Z" fill="#222"/>
<ellipse cx="769.500" cy="1055" rx="13" ry="13.500" stroke="#e0183c" stroke-width="2.200"/><ellipse cx="769.500" cy="1055" rx="6.500" ry="13" stroke="#c8163a" stroke-width="2"/>
<use href="#blend" transform="translate(833,1056) scale(.92)"/>
<path d="M1625.500 1059L1633 1051.500L1641 1059" stroke="#fff" stroke-width="1.200"/>
<path d="M1653 1051V1060H1656.500L1660.500 1062.500V1048L1656.500 1051Z" stroke="#fff" stroke-width="1.100"/><path d="M1664 1052Q1666 1055 1664 1059M1667 1050Q1669.500 1055 1667 1061" stroke="#ddd"/><path d="M1671 1048Q1674 1055 1671 1062" stroke="#666"/>
<rect x="1687" y="1050" width="15" height="10" stroke="#fff" stroke-width="1.100"/><rect x="1689" y="1052" width="11" height="6" fill="#fff"/><rect x="1702.500" y="1053" width="1.500" height="4" fill="#fff"/><path d="M1685 1049V1060M1683 1052H1687V1055H1683Z" stroke="#fff" stroke-width="1.200"/>
<path d="M1717 1062Q1717 1052 1730 1050M1720 1062Q1721 1056 1730 1054M1723.500 1062Q1724 1059.500 1730 1058" stroke="#d0d0d0"/><rect x="1728" y="1059" width="3" height="3" fill="#fff"/>
<path d="M1743 1045H1763V1062.500H1756L1753 1065L1750 1062.500H1743Z" fill="#fff"/><path d="M1747 1050H1759M1747 1053.500H1759M1747 1057H1755" stroke="#111" stroke-width="1.200"/>
</svg>

<!-- TEXT -->
<span class="t" style="left:35px;top:42px">File</span>
<span class="t" style="left:69px;top:42px">Edit</span>
<span class="t" style="left:105px;top:42px">Render</span>
<span class="t" style="left:157px;top:42px">Window</span>
<span class="t" style="left:216px;top:42px">Help</span>
<span class="t" style="left:274px;top:45px;color:#e4e4e4">Layout</span>
<span class="t d" style="left:330px;top:45px">Modeling</span>
<span class="t d" style="left:400px;top:45px">Sculpting</span>
<span class="t d" style="left:471px;top:45px">UV Editing</span>
<span class="t d" style="left:548px;top:45px">Texture Paint</span>
<span class="t d" style="left:638px;top:45px">Shading</span>
<span class="t d" style="left:702px;top:45px">Animation</span>
<span class="t d" style="left:777px;top:45px">Rendering</span>
<span class="t d" style="left:851px;top:45px">Compositing</span>
<span class="t d" style="left:940px;top:45px;letter-spacing:-.2px">Geometry Nodes</span>
<span class="t d" style="left:1048px;top:45px">Scripting</span>
<span class="t" style="left:72px;top:68px">Edit Mode</span>
<span class="t" style="left:221px;top:68px">View</span>
<span class="t" style="left:262px;top:68px">Select</span>
<span class="t" style="left:309px;top:68px">Add</span>
<span class="t" style="left:346px;top:68px">Mesh</span>
<span class="t" style="left:390px;top:68px">Vertex</span>
<span class="t" style="left:439px;top:68px">Edge</span>
<span class="t" style="left:481px;top:68px">Face</span>
<span class="t" style="left:521px;top:68px">UV</span>
<span class="t" style="left:694px;top:68px">Global</span>
<span class="t c" style="left:1438px;top:94px">X</span>
<span class="t c" style="left:1455px;top:94px">Y</span>
<span class="t c" style="left:1472px;top:94px">Z</span>
<span class="t" style="left:1520px;top:94px">Options</span>
<span class="t" style="left:65px;top:123px;color:#f4f4f4;text-shadow:0 0 1px #000,1px 1px 1px #000;-webkit-text-stroke:.25px #f4f4f4">Right Orthographic</span>
<span class="t" style="left:65px;top:141px;color:#f4f4f4;text-shadow:0 0 1px #000,1px 1px 1px #000;-webkit-text-stroke:.25px #f4f4f4">(1) Plane</span>
<span class="t" style="left:65px;top:159px;color:#f4f4f4;text-shadow:0 0 1px #000,1px 1px 1px #000;-webkit-text-stroke:.25px #f4f4f4">10 Centimeters</span>
<span class="t c" style="left:1535px;top:125px;font-size:11px;font-weight:bold;color:#0c2a50">Z</span>
<span class="t c" style="left:1535px;top:157px;font-size:11px;font-weight:bold;color:#5a0a18">X</span>
<span class="t c" style="left:1567px;top:157px;font-size:11px;font-weight:bold;color:#2a4000">Y</span>
<span class="t d" style="left:83px;top:917px">Move</span>
<span class="t" style="left:1622px;top:42px">Scene</span>
<span class="t" style="left:1799px;top:42px">ViewLayer</span>
<span class="t" style="left:1709px;top:68px;color:#666">Search</span>
<span class="t d" style="left:1632px;top:93px">Scene Collection</span>
<span class="t" style="left:1652px;top:113px;color:#d8d8d8">Collection</span>
<span class="t d" style="left:1672px;top:133px">Empty</span>
<span class="t" style="left:1672px;top:153px;color:#eaa23c">Plane</span>
<span class="t" style="left:1721px;top:375px;color:#666">Search</span>
<span class="t" style="left:1650px;top:406px">Plane</span>
<span class="t" style="left:1734px;top:406px">Plane</span>
<span class="t" style="left:1663px;top:442px;color:#d0d0d0">Plane</span>
<span class="t" style="left:1646px;top:475px">Vertex Groups</span>
<span class="t" style="left:1646px;top:598px">Shape Keys</span>
<span class="t" style="left:1649px;top:713px">Add Rest Position</span>
<span class="t" style="left:1646px;top:746px">UV Maps</span>
<span class="t" style="left:1646px;top:773px">Color Attributes</span>
<span class="t" style="left:1646px;top:800px">Attributes</span>
<span class="t" style="left:1646px;top:827px">Texture Space</span>
<span class="t" style="left:1646px;top:854px">Remesh</span>
<span class="t" style="left:1646px;top:881px">Geometry Data</span>
<span class="t" style="left:1646px;top:908px">Animation</span>
<span class="t" style="left:1646px;top:935px">Custom Properties</span>
<span class="t" style="left:53px;top:949px">Playback</span>
<span class="t" style="left:124px;top:949px">Keying</span>
<span class="t" style="left:187px;top:949px">View</span>
<span class="t" style="left:228px;top:949px">Marker</span>
<span class="t c" style="left:1340px;top:949px">1</span>
<span class="t" style="left:1419px;top:949px">Start</span>
<span class="t c" style="left:1475px;top:949px">1</span>
<span class="t" style="left:1508px;top:949px">End</span>
<span class="t" style="left:1544px;top:949px">250</span>
<span class="t c" style="left:58.700px;top:973px;color:#fff">1</span>
<span class="t c d" style="left:111.800px;top:973px">10</span><span class="t c d" style="left:170.700px;top:973px">20</span><span class="t c d" style="left:229.700px;top:973px">30</span><span class="t c d" style="left:288.600px;top:973px">40</span><span class="t c d" style="left:347.600px;top:973px">50</span><span class="t c d" style="left:406.500px;top:973px">60</span><span class="t c d" style="left:465.500px;top:973px">70</span><span class="t c d" style="left:524.400px;top:973px">80</span><span class="t c d" style="left:583.400px;top:973px">90</span><span class="t c d" style="left:642.300px;top:973px">100</span><span class="t c d" style="left:701.300px;top:973px">110</span><span class="t c d" style="left:760.200px;top:973px">120</span><span class="t c d" style="left:819.200px;top:973px">130</span><span class="t c d" style="left:878.100px;top:973px">140</span><span class="t c d" style="left:937.100px;top:973px">150</span><span class="t c d" style="left:996px;top:973px">160</span><span class="t c d" style="left:1055px;top:973px">170</span><span class="t c d" style="left:1113.900px;top:973px">180</span><span class="t c d" style="left:1172.900px;top:973px">190</span><span class="t c d" style="left:1231.800px;top:973px">200</span><span class="t c d" style="left:1290.800px;top:973px">210</span><span class="t c d" style="left:1349.700px;top:973px">220</span><span class="t c d" style="left:1408.700px;top:973px">230</span><span class="t c d" style="left:1467.600px;top:973px">240</span><span class="t c d" style="left:1526.600px;top:973px">250</span>
<span class="t" style="left:1882px;top:1019px;color:#8a8a8a;font-size:11px;letter-spacing:.5px">4.4.3</span>
<span class="t" style="left:75px;top:1055.500px;font-size:17.500px;color:#a0a0a0">Pesquisar na Web e no Windows</span>
<span class="t c" style="left:1790px;top:1044.500px;font-size:14.200px;color:#eee">POR</span>
<span class="t c" style="left:1790px;top:1066.500px;font-size:14.200px;color:#eee">PTB2</span>
<span class="t c" style="left:1863px;top:1043.500px;font-size:14.500px;color:#fff">20:44</span>
<span class="t c" style="left:1863px;top:1065.500px;font-size:14.800px;color:#fff">10/11/2025</span>
<span class="t" style="left:1482px;top:941px;font-size:25.500px;color:rgba(255,255,255,.32);letter-spacing:.2px">Ativar o Windows</span>
<span class="t" style="left:1482px;top:971px;font-size:17.200px;color:rgba(255,255,255,.32);letter-spacing:.2px">Acesse Configurações para ativar o Windows.</span>
</body></html>
